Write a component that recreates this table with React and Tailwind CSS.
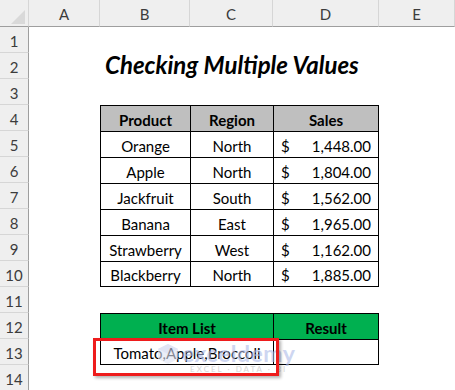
import React from 'react';

const cols = ['A', 'B', 'C', 'D', 'E'];

const products = [
  { name: 'Orange', region: 'North', sales: '1,448.00' },
  { name: 'Apple', region: 'North', sales: '1,804.00' },
  { name: 'Jackfruit', region: 'South', sales: '1,562.00' },
  { name: 'Banana', region: 'East', sales: '1,965.00' },
  { name: 'Strawberry', region: 'West', sales: '1,162.00' },
  { name: 'Blackberry', region: 'North', sales: '1,885.00' },
];

// numero da linha na coluna da esquerda
const RowNum = ({ n }) => (
  <div className="flex items-end justify-center pb-[2px] bg-[#efefef] border-r border-b border-r-[#9e9e9e] border-b-[#d6d6d6] text-[15px] leading-[18px] text-[#3c3c3c]">
    {n}
  </div>
);

const Td = ({ children, className = '', money = false }) => (
  <div
    className={`flex items-end pb-[2px] border-l border-t border-black text-[15px] leading-[18px] text-black ${
      money ? 'justify-between px-[7px]' : 'justify-center'
    } ${className}`}
  >
    {children}
  </div>
);

const App = () => {
  return (
    <div className="relative w-[455px] h-[390px] overflow-hidden bg-white font-['Lato',sans-serif]">
      <div className="grid grid-cols-[29px_71px_90px_83px_106px_76px] grid-rows-[27px_repeat(14,26px)]">
        {/* cabeçalho das colunas */}
        <div className="relative bg-[#efefef] border-b border-r border-b-[#9e9e9e] border-r-[#d6d6d6]">
          <svg className="absolute left-[11px] top-[10px]" width="15" height="15" viewBox="0 0 15 15">
            <polygon points="14,0 14,14 0,14" fill="#d9d9d9" />
          </svg>
        </div>
        {cols.map((c) => (
          <div
            key={c}
            className="flex items-end justify-center pb-[3px] bg-[#efefef] border-b border-r border-b-[#9e9e9e] border-r-[#d6d6d6] text-[15px] leading-[18px] text-[#3c3c3c]"
          >
            {c}
          </div>
        ))}

        {/* 1 */}
        <RowNum n={1} />
        <div className="col-span-5" />

        {/* 2 - título */}
        <RowNum n={2} />
        <div />
        <div className="col-span-4 flex items-end pl-[5px] pb-[1px]">
          <span className="text-[24px] leading-[26px] font-bold italic text-black whitespace-nowrap">
            Checking Multiple Values
          </span>
        </div>

        {/* 3 */}
        <RowNum n={3} />
        <div className="col-span-5" />

        {/* 4 - cabeçalho da tabela */}
        <RowNum n={4} />
        <div />
        <Td className="bg-[#bfbfbf] font-bold">Product</Td>
        <Td className="bg-[#bfbfbf] font-bold">Region</Td>
        <Td className="bg-[#bfbfbf] font-bold border-r">Sales</Td>
        <div />

        {products.map((p, i) => {
          const last = i === products.length - 1;
          return (
            <React.Fragment key={p.name}>
              <RowNum n={5 + i} />
              <div />
              <Td className={last ? 'border-b' : ''}>{p.name}</Td>
              <Td className={last ? 'border-b' : ''}>{p.region}</Td>
              <Td money className={`border-r ${last ? 'border-b' : ''}`}>
                <span>$</span>
                <span>{p.sales}</span>
              </Td>
              <div />
            </React.Fragment>
          );
        })}

        {/* 11 */}
        <RowNum n={11} />
        <div className="col-span-5" />

        {/* 12 */}
        <RowNum n={12} />
        <div />
        <Td className="col-span-2 bg-[#00b050] font-bold">Item List</Td>
        <Td className="bg-[#00b050] font-bold border-r">Result</Td>
        <div />

        {/* 13 */}
        <RowNum n={13} />
        <div />
        <Td className="col-span-2 border-b">Tomato,Apple,Broccoli</Td>
        <Td className="border-r border-b" />
        <div />

        {/* 14 */}
        <RowNum n={14} />
        <div className="col-span-5" />
      </div>

      {/* marca de água */}
      <div className="absolute left-[156px] top-[342px] flex items-start gap-[2px] opacity-60 pointer-events-none">
        <svg width="24" height="22" viewBox="0 0 24 22" className="mt-[1px]">
          <polygon points="12,1 22,6 22,16 12,21 2,16 2,6" fill="#dfe3f3" />
          <polygon points="12,1 22,6 12,11 2,6" fill="#cdd3ee" />
        </svg>
        <div className="flex flex-col items-center">
          <span className="text-[23px] leading-[22px] font-bold text-[#aebbe8] tracking-[0.5px]">exceldemy</span>
          <span className="text-[8px] leading-[9px] text-[#bdbdbd] tracking-[2px] mt-[1px]">EXCEL · DATA · BI</span>
        </div>
      </div>

      {/* destaque vermelho */}
      <div className="absolute left-[93px] top-[338px] w-[186px] h-[38px] border-[3px] border-[#ee1c1c] shadow-[2px_2px_3px_rgba(0,0,0,0.3)] pointer-events-none" />
    </div>
  );
};

export default App;
